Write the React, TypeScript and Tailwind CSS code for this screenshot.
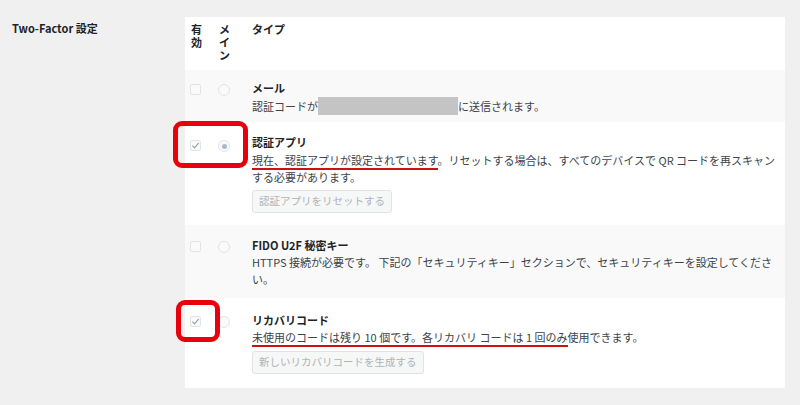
import React from "react";

const FONT = "font-['Noto_Sans_CJK_JP','Noto_Sans',sans-serif]";

function Checkbox({ checked = false }: { checked?: boolean }) {
  return (
    <div className="w-[11px] h-[11px] border border-[#e4e4e6] bg-[#fafafa] rounded-[2px] flex items-center justify-center">
      {checked && (
        <svg width="9" height="9" viewBox="0 0 10 10">
          <path d="M1.5 5.2 L4 7.6 L8.6 2" fill="none" stroke="#8fa3b8" strokeWidth="1.3" />
        </svg>
      )}
    </div>
  );
}

function Radio({ checked = false }: { checked?: boolean }) {
  return (
    <div className="w-[12px] h-[12px] border border-[#e4e4e6] bg-[#fafafa] rounded-full flex items-center justify-center">
      {checked && <div className="w-[5px] h-[5px] rounded-full bg-[#a9b8c8]" />}
    </div>
  );
}

function Button({ children }: { children: React.ReactNode }) {
  return (
    <div className="inline-flex items-center h-[23px] px-[6px] border border-[#e2e2e4] bg-[#f6f7f7] rounded-[3px] text-[10.5px] text-[#b0b3b6] leading-none">
      {children}
    </div>
  );
}

function Row({
  bg,
  h,
  pt,
  cbTop,
  checked,
  radio,
  children,
}: {
  bg: string;
  h: string;
  pt: string;
  cbTop: string;
  checked?: boolean;
  radio?: boolean;
  children: React.ReactNode;
}) {
  return (
    <div className={`flex pl-[5px] ${bg} ${h} ${pt}`}>
      <div className={`w-[28px] ${cbTop}`}>
        <Checkbox checked={checked} />
      </div>
      <div className={`w-[34px] ${cbTop}`}>
        <Radio checked={radio} />
      </div>
      <div className="flex-1 text-[11px] leading-[17px] text-[#3c434a]">{children}</div>
    </div>
  );
}

export default function App() {
  return (
    <div className={`w-[800px] h-[405px] bg-[#f0f0f1] flex ${FONT}`}>
      <div className="w-[185px] pl-[12px] pt-[21px] text-[11px] font-bold text-[#1d2327] leading-[14px]">
        Two-Factor 設定
      </div>
      <div className="relative mt-[17px] w-[600px] h-[371px] bg-white flex flex-col">
        {/* header */}
        <div className="flex pl-[5px] h-[53px] pt-[6px] text-[11px] font-bold leading-[13px] text-[#1d2327]">
          <div className="w-[28px] pl-px">
            <div>有</div>
            <div>効</div>
          </div>
          <div className="w-[34px] pl-px">
            <div>メ</div>
            <div>イ</div>
            <div>ン</div>
          </div>
          <div className="flex-1">タイプ</div>
        </div>

        {/* mail */}
        <Row bg="bg-[#f9f9f9]" h="h-[52px]" pt="pt-[10px]" cbTop="pt-[4px]">
          <div className="font-bold text-[#1d2327]">メール</div>
          <div className="flex items-center">
            <span>認証コードが</span>
            <span className="inline-block w-[140px] h-[18px] bg-[#c4c4c4]" />
            <span>に送信されます。</span>
          </div>
        </Row>

        {/* auth app */}
        <Row bg="bg-white" h="h-[103px]" pt="pt-[12px]" cbTop="pt-[6px]" checked radio>
          <div className="font-bold text-[#1d2327] mb-px">認証アプリ</div>
          <div className="whitespace-nowrap">
            <span className="border-b-2 border-[#cc1111]">現在、認証アプリが設定されています</span>
            。リセットする場合は、すべてのデバイスで QR コードを再スキャン
            <br />
            する必要があります。
          </div>
          <div className="mt-[4px]">
            <Button>認証アプリをリセットする</Button>
          </div>
        </Row>

        {/* fido */}
        <Row bg="bg-[#f9f9f9]" h="h-[73px]" pt="pt-[12px]" cbTop="pt-[4px]">
          <div className="font-bold text-[#1d2327]">FIDO U2F 秘密キー</div>
          <div className="whitespace-nowrap">
            HTTPS 接続が必要です。 下記の「セキュリティキー」セクションで、セキュリティキーを設定してくださ
            <br />
            い。
          </div>
        </Row>

        {/* recovery */}
        <Row bg="bg-white" h="h-[90px]" pt="pt-[14px]" cbTop="pt-[4px]" checked>
          <div className="font-bold text-[#1d2327]">リカバリコード</div>
          <div className="whitespace-nowrap">
            <span className="border-b-2 border-[#cc1111]">
              未使用のコードは残り 10 個です。各リカバリ コードは 1 回のみ
            </span>
            使用できます。
          </div>
          <div className="mt-[5px]">
            <Button>新しいリカバリコードを生成する</Button>
          </div>
        </Row>

        {/* red annotations */}
        <div className="absolute left-[-12px] top-[104px] w-[75px] h-[47px] border-[5px] border-[#e8000b] rounded-[9px]" />
        <div className="absolute left-[-9px] top-[283px] w-[44px] h-[42px] border-[5px] border-[#e8000b] rounded-[9px]" />
      </div>
    </div>
  );
}
